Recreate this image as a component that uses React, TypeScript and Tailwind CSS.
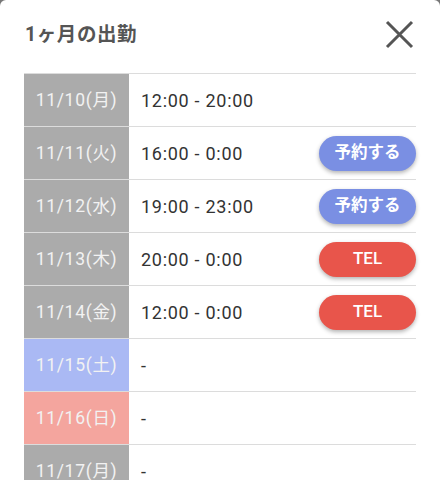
type Shift = {
    date: string
    kind: 'weekday' | 'sat' | 'sun'
    time: string
    action?: 'reserve' | 'tel'
}

const shifts: Shift[] = [
    { date: '11/10(月)', kind: 'weekday', time: '12:00 - 20:00' },
    { date: '11/11(火)', kind: 'weekday', time: '16:00 - 0:00', action: 'reserve' },
    { date: '11/12(水)', kind: 'weekday', time: '19:00 - 23:00', action: 'reserve' },
    { date: '11/13(木)', kind: 'weekday', time: '20:00 - 0:00', action: 'tel' },
    { date: '11/14(金)', kind: 'weekday', time: '12:00 - 0:00', action: 'tel' },
    { date: '11/15(土)', kind: 'sat', time: '-' },
    { date: '11/16(日)', kind: 'sun', time: '-' },
    { date: '11/17(月)', kind: 'weekday', time: '-' },
]

const dateBg = {
    weekday: 'bg-[#ababab]',
    sat: 'bg-[#aab9f4]',
    sun: 'bg-[#f4a59e]',
}

function ShiftRow({ shift }: { shift: Shift }) {
    return (
        <div className="flex h-[53px] border-b border-[#dcdcdc]">
            <div
                className={`flex w-[105px] shrink-0 items-center justify-center text-[17.5px] tracking-[0.04em] text-[#f2f2f2] ${dateBg[shift.kind]}`}
            >
                {shift.date}
            </div>
            <div className="flex flex-1 items-center justify-between pl-3">
                <span className="text-[18px] tracking-[0.04em] text-[#333]">{shift.time}</span>
                {shift.action === 'reserve' && (
                    <button className="h-[35px] w-[97px] rounded-full bg-[#7a8fe3] text-[16.5px] font-bold text-white shadow-[0_2px_4px_rgba(0,0,0,0.3)]">
                        予約する
                    </button>
                )}
                {shift.action === 'tel' && (
                    <button className="h-[35px] w-[97px] rounded-full bg-[#e8554b] text-[17px] font-medium text-white shadow-[0_2px_4px_rgba(0,0,0,0.3)]">
                        TEL
                    </button>
                )}
            </div>
        </div>
    )
}

function CloseIcon() {
    return (
        <svg width="29" height="29" viewBox="0 0 29 29" fill="none">
            <path d="M2 2L27 27M27 2L2 27" stroke="#555" strokeWidth="3" />
        </svg>
    )
}

export default function App() {
    return (
        <div className="h-[480px] w-[440px] overflow-hidden bg-[#777] font-['Roboto','Noto_Sans_CJK_JP',sans-serif]">
            <div className="h-full rounded-t-[6px] bg-white px-6">
                <div className="flex h-[73px] items-center justify-between pb-1">
                    <h2 className="pl-px text-[19.5px] font-bold tracking-[0.03em] text-[#555]">1ヶ月の出勤</h2>
                    <button className="mr-[2px]">
                        <CloseIcon />
                    </button>
                </div>
                <div className="border-t border-[#dcdcdc]">
                    {shifts.map((s) => (
                        <ShiftRow key={s.date} shift={s} />
                    ))}
                </div>
            </div>
        </div>
    )
}
